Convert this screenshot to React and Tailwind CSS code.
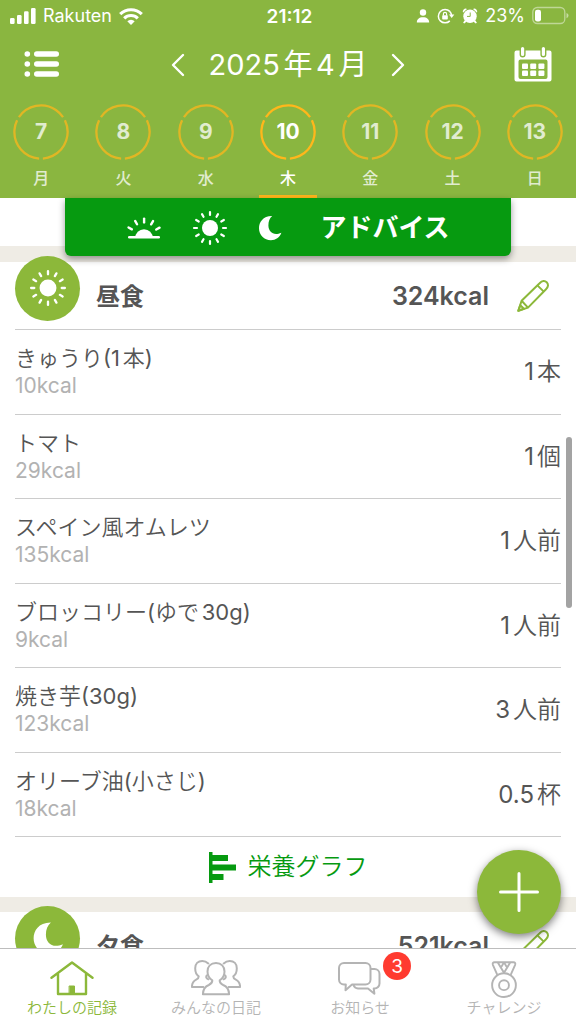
import React from "react";

const DAYS = [
  { day: 7, name: "月" },
  { day: 8, name: "火" },
  { day: 9, name: "水" },
  { day: 10, name: "木", active: true },
  { day: 11, name: "金" },
  { day: 12, name: "土" },
  { day: 13, name: "日" },
];

const FOODS = [
  { name: "きゅうり(1本)", kcal: "10kcal", amount: "1本" },
  { name: "トマト", kcal: "29kcal", amount: "1個" },
  { name: "スペイン風オムレツ", kcal: "135kcal", amount: "1人前" },
  { name: "ブロッコリー(ゆで30g)", kcal: "9kcal", amount: "1人前" },
  { name: "焼き芋(30g)", kcal: "123kcal", amount: "3人前" },
  { name: "オリーブ油(小さじ)", kcal: "18kcal", amount: "0.5杯" },
];

const RAYS = [0, 30, 60, 90, 120, 150, 180, 210, 240, 270, 300, 330];

function SunIcon({ className }) {
  return (
    <svg viewBox="0 0 36 36" className={className} fill="currentColor" aria-hidden="true">
      <circle cx="18" cy="18" r="8" />
      {RAYS.map((a) => (
        <rect key={a} x="16.9" y="0.9" width="2.2" height="5.2" rx="1.1" transform={`rotate(${a} 18 18)`} />
      ))}
    </svg>
  );
}

function SunriseIcon() {
  return (
    <svg viewBox="0 0 36 36" className="size-9" fill="currentColor" aria-hidden="true">
      <path d="M9.2 28a8.8 8.8 0 0 1 17.6 0z" />
      <rect x="2" y="26" width="32" height="2.6" rx="1.3" />
      {[-60, -30, 0, 30, 60].map((a) => (
        <rect key={a} x="16.900" y="7.4" width="2.4" height="6.2" rx="1.2" transform={`rotate(${a} 18 26.5)`} />
      ))}
    </svg>
  );
}

function MoonIcon({ className }) {
  return (
    <svg viewBox="0 0 24 26" className={className} fill="currentColor" aria-hidden="true">
      <path d="M14.2 1.1C4.800 1 1 7.500 1 13.200c0 6.600 5.200 12 11.900 12 4.800 0 8.700-2.700 10.500-7.400-2 .9-3.800 1.200-5.300 1.200-4.600 0-7.700-3.700-7.700-8.500 0-3.900 1.200-7.200 3.800-9.400z" />
    </svg>
  );
}

function PencilIcon() {
  return (
    <svg viewBox="0 0 32 32" className="size-8" fill="none" stroke="currentColor" strokeWidth="2" strokeLinejoin="round" aria-hidden="true">
      <path d="M1.300 30.800 4.600 20.800 22.600 3.200C25.200.5 28 .6 29.700 2.300c1.900 1.900 1.700 4.700-.7 7L11 27.600z" />
      <path d="M4.600 20.800 11 27.600M20.400 5.400l6.400 6.200M1.300 30.800l2-5.600 3.600 3.500z" />
    </svg>
  );
}

function SignalIcon() {
  return (
    <svg viewBox="0 0 26 16" className="h-4 w-[26px]" fill="currentColor" aria-hidden="true">
      <rect x="0" y="10" width="4.600" height="6" rx="1.300" />
      <rect x="7" y="7" width="4.600" height="9" rx="1.300" />
      <rect x="14" y="3.300" width="4.600" height="12.700" rx="1.300" />
      <rect x="21" y="0" width="4.600" height="16" rx="1.300" />
    </svg>
  );
}

function WifiIcon() {
  return (
    <svg viewBox="0 0 24 17" className="h-[17px] w-6" fill="none" stroke="currentColor" strokeWidth="3.100" aria-hidden="true">
      <path d="M1.200 6.200a15.300 15.300 0 0 1 21.600 0" />
      <path d="M5.200 10.300a9.600 9.600 0 0 1 13.600 0" />
      <path d="M12 17 8.300 13.300a5.200 5.200 0 0 1 7.400 0z" fill="currentColor" stroke="none" />
    </svg>
  );
}

function StatusBar() {
  return (
    <div className="grid h-8 grid-cols-[1fr_auto_1fr] items-center pl-[10px] pr-[7px] text-[18px] leading-none">
      <div className="flex items-center gap-[7px]">
        <SignalIcon />
        <span>Rakuten</span>
        <WifiIcon />
      </div>
      <span className="text-[19px] font-semibold">21:12</span>
      <div className="flex items-center justify-end gap-[7px]">
        <svg viewBox="0 0 14 14" className="size-[14px]" fill="currentColor" aria-hidden="true">
          <circle cx="7" cy="3.500" r="3.200" />
          <path d="M.8 13.500c0-3.300 2.300-5.300 6.200-5.300s6.200 2 6.200 5.300z" />
        </svg>
        <svg viewBox="0 0 18 16" className="h-4 w-[18px]" fill="none" stroke="currentColor" aria-hidden="true">
          <path d="M12.800 3.400A6.700 6.700 0 1 0 12.800 12.900M12.800 3.400a6.700 6.700 0 0 1 1.800 4" strokeWidth="1.500" />
          <path d="M12 6.600h5.300l-2.600 3.500z" fill="currentColor" stroke="none" />
          <rect x="5.200" y="7.200" width="5.600" height="4.400" rx=".8" fill="currentColor" stroke="none" />
          <path d="M6.400 7.400V5.900a1.600 1.600 0 0 1 3.200 0v1.500" strokeWidth="1.200" />
        </svg>
        <svg viewBox="0 0 16 16" className="size-4" fill="currentColor" aria-hidden="true">
          <path d="M1 4.800A3 3 0 0 1 5 .9zM15 4.800A3 3 0 0 0 11 .9z" />
          <circle cx="8" cy="8.200" r="6.700" />
          <path d="m2.700 12.200-1.600 2.600 1.200.6 2.400-1.800zM13.300 12.200l1.600 2.600-1.200.6-2.400-1.800z" />
          <path d="M8.200 4.500v3.900H5" fill="none" stroke="#8ab640" strokeWidth="1" />
        </svg>
        <span>23%</span>
        <svg viewBox="1 0 37 20" className="h-5 w-[37px]" fill="none" aria-hidden="true">
          <rect x="1.800" y="1.500" width="32" height="16" rx="4.500" stroke="currentColor" strokeOpacity=".45" strokeWidth="1.300" />
          <rect x="4" y="3.800" width="6" height="11.600" rx="2.200" fill="currentColor" />
          <path d="M35.500 7v5.200c1.300-.5 2-1.400 2-2.600s-.7-2.100-2-2.600z" fill="currentColor" fillOpacity=".5" />
        </svg>
      </div>
    </div>
  );
}

function MonthBar() {
  return (
    <div className="flex h-[66px] items-center justify-between px-6">
      <button type="button" aria-label="メニュー" className="w-[52px]">
        <svg viewBox="0 1 36 28" className="h-7 w-9" fill="currentColor" aria-hidden="true">
          {[4, 14, 24].map((y) => (
            <g key={y}>
              <circle cx="3.300" cy={y} r="2.800" />
              <rect x="10" y={y - 2.8} width="25" height="5.600" rx="2.800" />
            </g>
          ))}
        </svg>
      </button>
      <div className="flex items-center gap-6">
        <button type="button" aria-label="前の月">
          <svg viewBox="0 0 14 24" className="h-6 w-[14px]" fill="none" stroke="currentColor" strokeWidth="2.400" strokeLinecap="round" strokeLinejoin="round" aria-hidden="true">
            <path d="M12 2 2 12l10 10" />
          </svg>
        </button>
        <h1 className="text-[29px] font-normal leading-10 [text-autospace:normal]">2025年4月</h1>
        <button type="button" aria-label="次の月">
          <svg viewBox="0 0 14 24" className="h-6 w-[14px]" fill="none" stroke="currentColor" strokeWidth="2.400" strokeLinecap="round" strokeLinejoin="round" aria-hidden="true">
            <path d="m2 2 10 10L2 22" />
          </svg>
        </button>
      </div>
      <button type="button" aria-label="カレンダー" className="flex w-[52px] justify-end">
        <svg viewBox="0 1 38 36" className="h-9 w-[38px]" aria-hidden="true">
          <path fillRule="evenodd" fill="currentColor" d="M2.500 4.500h33a2 2 0 0 1 2 2v27a2 2 0 0 1-2 2h-33a2 2 0 0 1-2-2v-27a2 2 0 0 1 2-2zM6.500 13.500a2 2 0 0 0-2 2v15.500a2 2 0 0 0 2 2h25a2 2 0 0 0 2-2V15.500a2 2 0 0 0-2-2z" />
          <path d="M8.600 2.500V8.500M29.400 2.500V8.500" stroke="#8ab640" strokeWidth="6" strokeLinecap="round" />
          <path d="M8.600 2.600V8.500M29.400 2.600V8.500" stroke="currentColor" strokeWidth="3.200" strokeLinecap="round" />
          {[17.5, 24.5].map((y) =>
            [8, 16.2, 24.4].map((x) => <rect key={x + "-" + y} x={x} y={y} width="6" height="5.400" rx="1" fill="currentColor" />)
          )}
        </svg>
      </button>
    </div>
  );
}

function DayRing() {
  return (
    <svg viewBox="0 0 56 56" className="col-start-1 row-start-1 size-14" fill="none" stroke="#ffb71b" strokeWidth="2.300" aria-hidden="true">
      {[0, 120, 240].map((a) => (
        <circle key={a} cx="28" cy="28" r="26.600" pathLength="360" strokeDasharray="112 248" transform={`rotate(${a + 94} 28 28)`} />
      ))}
    </svg>
  );
}

function DayStrip() {
  return (
    <nav aria-label="日付" className="grid h-[100px] grid-cols-7 justify-items-center">
      {DAYS.map((d) => (
        <button
          key={d.day}
          type="button"
          aria-pressed={!!d.active}
          className={
            d.active
              ? "flex w-[58px] flex-col items-center border-b-[3px] border-[#ffb71b] pt-[6px]"
              : "flex w-[58px] flex-col items-center pt-[6px] opacity-75"
          }
        >
          <span className="grid place-items-center">
            <DayRing />
            <span className="col-start-1 row-start-1 text-[21px] font-bold">{d.day}</span>
          </span>
          <span className="mt-[6px] text-[16px] font-medium leading-6">{d.name}</span>
        </button>
      ))}
    </nav>
  );
}

function MealHeader({ title, kcal, children }) {
  return (
    <div className="flex h-[67px] items-center">
      <span className="-mt-[15px] grid size-[65px] place-items-center rounded-full bg-[#8cb83a] text-white">{children}</span>
      <h2 className="ml-4 pt-[2px] text-[24px] font-bold">{title}</h2>
      <span className="ml-auto pt-[2px] text-[25px] font-semibold">{kcal}</span>
      <button type="button" aria-label={title + "を編集"} className="ml-7 mr-3 text-[#8cb83a]">
        <PencilIcon />
      </button>
    </div>
  );
}

function HomeIcon() {
  return (
    <svg viewBox="0 0 44 36" className="h-9 w-11" fill="none" stroke="currentColor" strokeWidth="2.400" strokeLinecap="round" strokeLinejoin="round" aria-hidden="true">
      <path d="M1.500 17.800 22 2.500l20.500 15.300M8 14v20h28V14" />
      <path d="M19.500 26h5v8h-5z" fill="currentColor" strokeWidth="1" strokeLinejoin="miter" />
    </svg>
  );
}

function PeopleIcon() {
  return (
    <svg viewBox="0 0 50 36" className="h-9 w-[50px]" fill="none" stroke="currentColor" strokeWidth="2" strokeLinecap="round" strokeLinejoin="round" aria-hidden="true">
      <path d="M17.300 3.400C15.500 1.700 13.500 1 11.300 1 7 1 4.200 4 4.200 8.300c0 3.500 1.100 6.500 3.500 8 .1 2-.7 2.500-2.500 3.300C2.200 21 1 22.800.9 27h11.500M15.700 15.500c-.9 1.700-.6 2.800 1.700 3.800" />
      <path d="M32.700 3.400C34.500 1.700 36.500 1 38.700 1c4.300 0 7.100 3 7.100 7.300 0 3.500-1.100 6.500-3.500 8-.1 2 .7 2.500 2.500 3.300 3 1.400 4.200 3.200 4.300 7.400H37.600M34.300 15.500c.9 1.700.6 2.800-1.700 3.800" />
      <path d="M25 3c-5.300 0-8.500 3.500-8.500 8.500 0 3.800 1.500 6.800 4.800 8.800.2 2.700-.8 3.500-3.500 4.700-4.200 1.700-5.700 4-5.900 9.200h26.200c-.2-5.200-1.700-7.500-5.900-9.200-2.700-1.200-3.700-2-3.500-4.700 3.300-2 4.800-5 4.800-8.800C33.500 6.500 30.300 3 25 3z" />
    </svg>
  );
}

function ChatIcon() {
  return (
    <svg viewBox="0 0 44 36" className="h-9 w-11" fill="none" stroke="currentColor" strokeWidth="2" strokeLinecap="round" strokeLinejoin="round" aria-hidden="true">
      <path d="M6 3h21.500a5 5 0 0 1 5 5v11.500a5 5 0 0 1-5 5H14l-6.500 5.700.3-5.700H6a5 5 0 0 1-5-5V8a5 5 0 0 1 5-5z" />
      <path d="M33 9h3.500a5 5 0 0 1 5 5v9.500a5 5 0 0 1-5 5h-.8l.7 5.200-6.400-5.200H20a5 5 0 0 1-4.500-3.500" />
    </svg>
  );
}

function MedalIcon() {
  return (
    <svg viewBox="0 0 28 40" className="-mb-[2px] h-[38px] w-7" fill="none" stroke="currentColor" strokeWidth="2" strokeLinejoin="round" aria-hidden="true">
      <circle cx="14" cy="26.500" r="12.500" />
      <circle cx="14" cy="26.500" r="5.200" />
      <path d="M7.200 16.200 2.400 5.300c-.7-1.700 0-3 1.600-3h3.300L14 13.500M20.800 16.200l4.800-10.900c.7-1.700 0-3-1.600-3h-3.300L14 13.500M7.300 2.300h13.400M10.800 8l3.200-5.500L17.200 8" />
    </svg>
  );
}

function Tab({ label, active, badge, children }) {
  return (
    <a
      href="#"
      aria-current={active ? "page" : undefined}
      className={
        active
          ? "flex flex-col items-center justify-end pb-1 text-[#8cb83a]"
          : "flex flex-col items-center justify-end pb-1 text-[#b4b4b4]"
      }
    >
      <span className="relative">
        {children}
        {badge && (
          <span className="absolute -top-2 left-[45px] grid size-7 place-items-center rounded-full bg-[#ff3b30] text-[19px] leading-none text-white">
            {badge}
          </span>
        )}
      </span>
      <span className="text-[15px] font-[350] leading-6">{label}</span>
    </a>
  );
}

export default function App() {
  return (
    <div className="flex h-screen flex-col overflow-hidden bg-white font-['Inter','Noto_Sans_CJK_JP',sans-serif] text-[#555555]">
      <header className="shrink-0 bg-[#8ab640] text-white">
        <StatusBar />
        <MonthBar />
        <DayStrip />
      </header>

      <div className="relative min-h-0 flex-1">
        <main className="h-full overflow-hidden">
          <div className="h-12" />
          <section className="border-t-[16px] border-[#efece5] px-[15px]">
            <MealHeader title="昼食" kcal="324kcal">
              <SunIcon className="size-[38px]" />
            </MealHeader>
            <ul className="grid min-h-[508px] auto-rows-fr border-b border-[#cccccc] font-['Inter','Noto_Sans_CJK_JP_DemiLight','Noto_Sans_CJK_JP',sans-serif]">
              {FOODS.map((f) => (
                <li key={f.name} className="flex items-center justify-between border-t border-[#cccccc] pt-px">
                  <div className="leading-[27px]">
                    <p className="text-[22px] [text-autospace:normal]">{f.name}</p>
                    <p className="text-[21px] text-[#b2b2b2]">{f.kcal}</p>
                  </div>
                  <span className="text-[24px] [text-autospace:normal]">{f.amount}</span>
                </li>
              ))}
            </ul>
            <button type="button" className="flex h-[60px] w-full items-center justify-center gap-3 text-[24px] font-[350] text-[#069a10]">
              <svg viewBox="0 0 27 31" className="h-[31px] w-[27px]" fill="currentColor" aria-hidden="true">
                <path d="M0 0h3.500v3H19v6H3.500v3.500H27v6H3.500v3.500H14.500v6H3.500v3H0z" />
              </svg>
              栄養グラフ
            </button>
          </section>
          <section className="border-t-[15px] border-[#efece5] px-[15px]">
            <MealHeader title="夕食" kcal="521kcal">
              <MoonIcon className="h-[34px] w-8" />
            </MealHeader>
          </section>
        </main>

        <button
          type="button"
          className="absolute left-[65px] right-[65px] top-0 flex h-[58px] items-center justify-center rounded-b-md bg-[#069a10] pt-px text-white shadow-[0_3px_7px_rgba(0,0,0,0.4)]"
        >
          <SunriseIcon />
          <SunIcon className="ml-[30px] size-9" />
          <MoonIcon className="ml-[30px] h-[26px] w-6" />
          <span className="ml-[38px] text-[26px] font-bold">アドバイス</span>
        </button>

        <div className="absolute right-1 top-[239px] h-[171px] w-[6px] rounded-full bg-[#a3a3a3]" />

        <button
          type="button"
          aria-label="追加"
          className="absolute bottom-[14px] right-[15px] grid size-[84px] place-items-center rounded-full bg-[#8cb83a] text-white shadow-[0_3px_8px_rgba(0,0,0,0.5)]"
        >
          <svg viewBox="0 0 40 40" className="size-10" stroke="currentColor" strokeWidth="3" strokeLinecap="round" aria-hidden="true">
            <path d="M20 1.500v37M1.500 20h37" />
          </svg>
        </button>
      </div>

      <nav aria-label="メイン" className="grid h-[76px] shrink-0 grid-cols-4 border-t border-[#bdbdbd] bg-white">
        <Tab label="わたしの記録" active>
          <HomeIcon />
        </Tab>
        <Tab label="みんなの日記">
          <PeopleIcon />
        </Tab>
        <Tab label="お知らせ" badge="3">
          <ChatIcon />
        </Tab>
        <Tab label="チャレンジ">
          <MedalIcon />
        </Tab>
      </nav>
    </div>
  );
}
